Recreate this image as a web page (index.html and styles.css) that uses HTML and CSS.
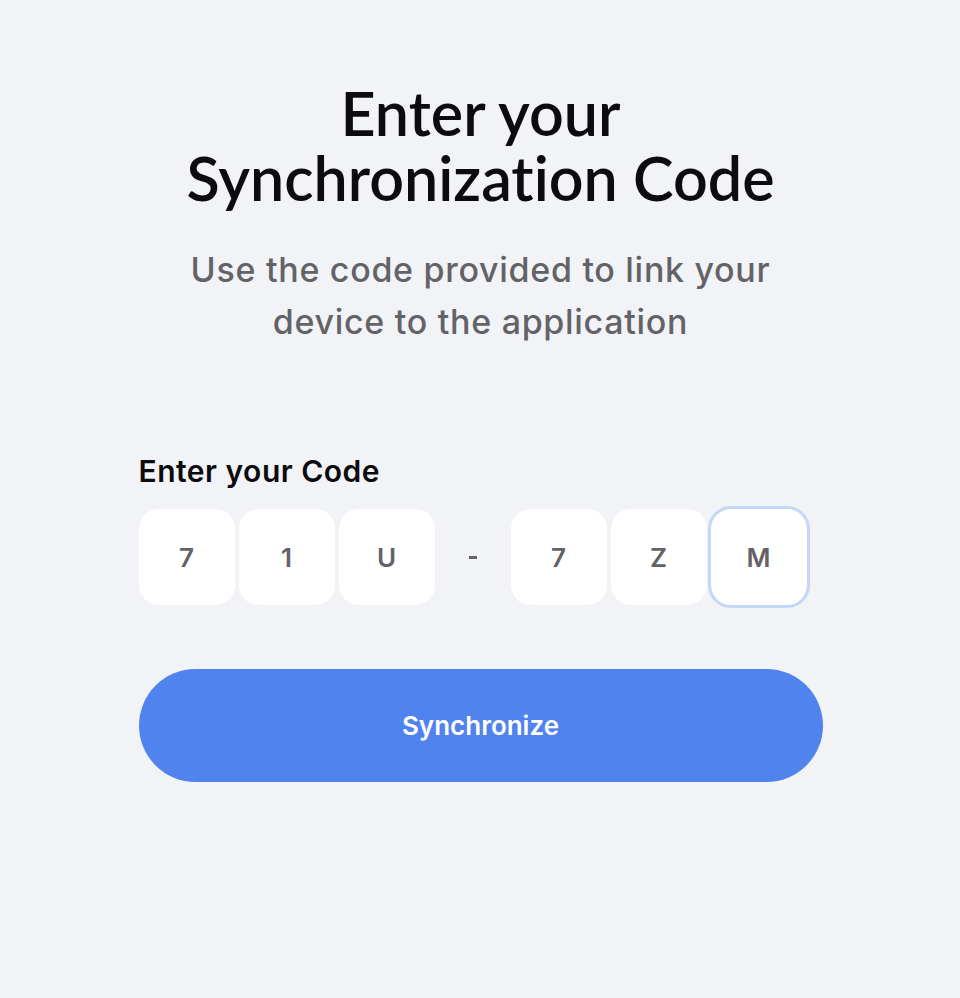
FILE: index.html
```html
<!DOCTYPE html>
<html lang="en">
<head>
  <meta charset="UTF-8" />
  <title>Synchronize</title>
  <meta name="viewport" content="width=device-width, initial-scale=1.0" />
  <link rel="stylesheet" href="styles.css">
</head>
<body>

<div class="container">
  <h1>Enter your<br>Synchronization Code</h1>

  <p class="sub">Use the code provided to link your device to the application</p>

  <label class="label">Enter your Code</label>

  <div class="code">
    <div class="digit">7</div>
    <div class="digit">1</div>
    <div class="digit">U</div>
    <div class="dash"></div>
    <div class="digit">7</div>
    <div class="digit">Z</div>
    <div class="digit active">M</div>
  </div>

  <button class="btn-main">Synchronize</button>
</div>

</body>
</html>
```

FILE: styles.css
```css
body {
  font-family: Inter, "Noto Sans", sans-serif;
  background: #f2f3f7;
  margin: 0;
}

.container {
  width: 684px;
  margin: 0 auto;
  padding: 80px 0 0 1px;
}

h1 {
  font-family: Lato, sans-serif;
  font-weight: 600;
  font-size: 61px;
  line-height: 65px;
  font-variant-ligatures: none;
  text-align: center;
  color: #0c0c0e;
  margin: 0;
}

.sub {
  width: 640px;
  margin: 34px auto 0;
  font-size: 34px;
  line-height: 52px;
  font-weight: 550;
  letter-spacing: 0.7px;
  text-align: center;
  color: #636367;
}

.label {
  display: block;
  margin-top: 105px;
  font-size: 30px;
  line-height: 36px;
  font-weight: 600;
  letter-spacing: 0.5px;
  color: #0c0c0e;
}

.code {
  display: flex;
  align-items: center;
  gap: 4px;
  margin-top: 20px;
}

.digit {
  width: 96px;
  height: 96px;
  border-radius: 20px;
  background: #fff;
  display: flex;
  align-items: center;
  justify-content: center;
  font-size: 26px;
  font-weight: 600;
  color: #636366;
}

.digit.active {
  outline: 3px solid #c4d7f8;
}

.dash {
  width: 8px;
  height: 3px;
  background: #666;
  margin: 0 30px;
}

.btn-main {
  display: block;
  width: 100%;
  height: 113px;
  margin-top: 64px;
  border: none;
  border-radius: 57px;
  background: #5083ee;
  color: #fff;
  font-family: Inter, sans-serif;
  font-size: 26px;
  font-weight: 600;
  cursor: pointer;
}
```
